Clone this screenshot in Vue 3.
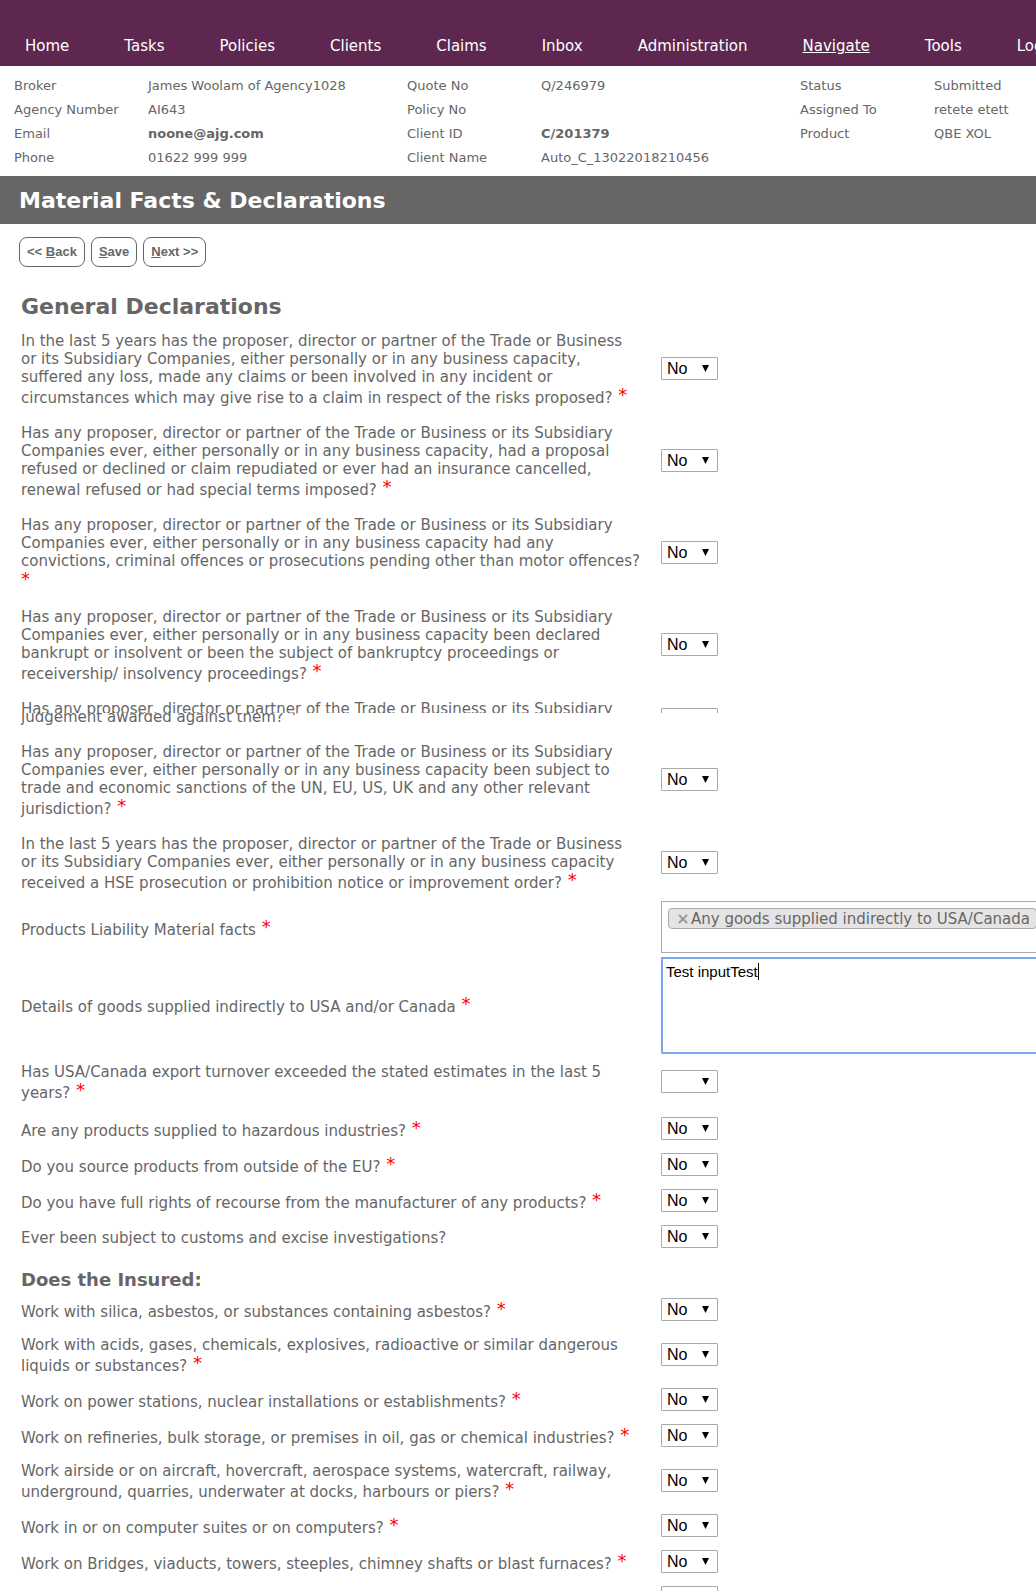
<script setup>
const nav = ['Home', 'Tasks', 'Policies', 'Clients', 'Claims', 'Inbox', 'Administration', 'Navigate', 'Tools', 'Logout']

const details = [
  [
    { term: 'Broker', value: 'James Woolam of Agency1028' },
    { term: 'Agency Number', value: 'AI643' },
    { term: 'Email', value: 'noone@ajg.com', strong: true },
    { term: 'Phone', value: '01622 999 999' },
  ],
  [
    { term: 'Quote No', value: 'Q/246979' },
    { term: 'Policy No', value: '' },
    { term: 'Client ID', value: 'C/201379', strong: true },
    { term: 'Client Name', value: 'Auto_C_13022018210456' },
  ],
  [
    { term: 'Status', value: 'Submitted' },
    { term: 'Assigned To', value: 'retete etett' },
    { term: 'Product', value: 'QBE XOL' },
  ],
]

const general = [
  { id: 'losses', required: true, value: 'No', text: 'In the last 5 years has the proposer, director or partner of the Trade or Business\nor its Subsidiary Companies, either personally or in any business capacity,\nsuffered any loss, made any claims or been involved in any incident or\ncircumstances which may give rise to a claim in respect of the risks proposed?' },
  { id: 'refused', required: true, value: 'No', text: 'Has any proposer, director or partner of the Trade or Business or its Subsidiary\nCompanies ever, either personally or in any business capacity, had a proposal\nrefused or declined or claim repudiated or ever had an insurance cancelled,\nrenewal refused or had special terms imposed?' },
  { id: 'convictions', required: true, value: 'No', text: 'Has any proposer, director or partner of the Trade or Business or its Subsidiary\nCompanies ever, either personally or in any business capacity had any\nconvictions, criminal offences or prosecutions pending other than motor offences?\n' },
  { id: 'bankrupt', required: true, value: 'No', text: 'Has any proposer, director or partner of the Trade or Business or its Subsidiary\nCompanies ever, either personally or in any business capacity been declared\nbankrupt or insolvent or been the subject of bankruptcy proceedings or\nreceivership/ insolvency proceedings?' },
  { id: 'judgement', required: false, value: 'No', part: 'head', text: 'Has any proposer, director or partner of the Trade or Business or its Subsidiary' },
  { id: 'judgement-end', required: true, part: 'tail', text: 'judgement awarded against them?' },
  { id: 'sanctions', required: true, value: 'No', text: 'Has any proposer, director or partner of the Trade or Business or its Subsidiary\nCompanies ever, either personally or in any business capacity been subject to\ntrade and economic sanctions of the UN, EU, US, UK and any other relevant\njurisdiction?' },
  { id: 'hse', required: true, value: 'No', text: 'In the last 5 years has the proposer, director or partner of the Trade or Business\nor its Subsidiary Companies ever, either personally or in any business capacity\nreceived a HSE prosecution or prohibition notice or improvement order?' },
]

const products = [
  { id: 'turnover', required: true, value: '', text: 'Has USA/Canada export turnover exceeded the stated estimates in the last 5\nyears?' },
  { id: 'hazardous', required: true, value: 'No', part: 'compact', text: 'Are any products supplied to hazardous industries?' },
  { id: 'outside-eu', required: true, value: 'No', part: 'compact', text: 'Do you source products from outside of the EU?' },
  { id: 'recourse', required: true, value: 'No', part: 'compact', text: 'Do you have full rights of recourse from the manufacturer of any products?' },
  { id: 'customs', required: false, value: 'No', part: 'compact', text: 'Ever been subject to customs and excise investigations?' },
]

const insured = [
  { id: 'asbestos', text: 'Work with silica, asbestos, or substances containing asbestos?' },
  { id: 'acids', text: 'Work with acids, gases, chemicals, explosives, radioactive or similar dangerous\nliquids or substances?' },
  { id: 'power', text: 'Work on power stations, nuclear installations or establishments?' },
  { id: 'refineries', text: 'Work on refineries, bulk storage, or premises in oil, gas or chemical industries?' },
  { id: 'airside', text: 'Work airside or on aircraft, hovercraft, aerospace systems, watercraft, railway,\nunderground, quarries, underwater at docks, harbours or piers?' },
  { id: 'computers', text: 'Work in or on computer suites or on computers?' },
  { id: 'bridges', text: 'Work on Bridges, viaducts, towers, steeples, chimney shafts or blast furnaces?' },
]

// No gap before the marker when it stands alone on its line
const marker = (text) => (text.endsWith('\n') ? '*' : '\u00a0*')
</script>

<template>
  <div class="page">
    <nav class="nav">
      <a v-for="item in nav" :key="item" href="#" :class="{ active: item === 'Navigate' }">{{ item }}</a>
    </nav>

    <section class="details">
      <dl v-for="(group, i) in details" :key="i">
        <div v-for="d in group" :key="d.term">
          <dt>{{ d.term }}</dt>
          <dd :class="{ strong: d.strong }">{{ d.value }}</dd>
        </div>
      </dl>
    </section>

    <h1>Material Facts &amp; Declarations</h1>

    <div class="actions">
      <button type="button">&lt;&lt; <u>B</u>ack</button>
      <button type="button"><u>S</u>ave</button>
      <button type="button"><u>N</u>ext &gt;&gt;</button>
    </div>

    <form @submit.prevent>
      <h2>General Declarations</h2>
      <div v-for="q in general" :key="q.id" class="row" :class="q.part">
        <label :for="q.part === 'tail' ? 'judgement' : q.id">{{ q.text }}<span v-if="q.required" class="req">{{ marker(q.text) }}</span></label>
        <select v-if="q.part !== 'tail'" :id="q.id" :value="q.value">
          <option value=""></option>
          <option>No</option>
          <option>Yes</option>
        </select>
      </div>

      <div class="row wide">
        <span id="facts-label" class="label">Products Liability Material facts<span class="req">&nbsp;*</span></span>
        <ul class="chips" aria-labelledby="facts-label">
          <li><button type="button" aria-label="Remove">×</button>Any goods supplied indirectly to USA/Canada</li>
        </ul>
      </div>
      <div class="row wide">
        <label for="goods">Details of goods supplied indirectly to USA and/or Canada<span class="req">&nbsp;*</span></label>
        <div class="field">
          <textarea id="goods">Test inputTest</textarea>
          <span class="caret"></span>
        </div>
      </div>

      <div v-for="q in products" :key="q.id" class="row" :class="q.part">
        <label :for="q.id">{{ q.text }}<span v-if="q.required" class="req">&nbsp;*</span></label>
        <select :id="q.id" :value="q.value">
          <option value=""></option>
          <option>No</option>
          <option>Yes</option>
        </select>
      </div>

      <h3>Does the Insured:</h3>
      <div v-for="q in insured" :key="q.id" class="row compact">
        <label :for="q.id">{{ q.text }}<span class="req">&nbsp;*</span></label>
        <select :id="q.id">
          <option>No</option>
          <option>Yes</option>
        </select>
      </div>
      <div class="row compact">
        <span></span>
        <select aria-label="Next question">
          <option></option>
        </select>
      </div>
    </form>
  </div>
</template>

<style>
body {
  margin: 0;
  background: #fff;
}
</style>

<style scoped>
.page {
  height: 100vh;
  overflow: hidden;
  color: #666;
  font-family: Verdana, "DejaVu Sans", sans-serif;
  font-size: 15px;
  line-height: 18px;
}
.nav {
  display: flex;
  gap: 55px;
  height: 66px;
  box-sizing: border-box;
  padding: 37px 0 0 25px;
  background: #5d2750;
  white-space: nowrap;
  overflow: hidden;
}
.nav a {
  color: #fff;
  text-decoration: none;
}
.nav a.active {
  text-decoration: underline;
}
.details {
  display: flex;
  height: 110px;
  box-sizing: border-box;
  padding: 8px 0 0 14px;
  font-size: 13px;
  line-height: 24px;
}
.details dl {
  width: 393px;
  flex: none;
  margin: 0;
}
.details dl > div {
  display: flex;
  min-height: 24px;
}
.details dt {
  width: 134px;
}
.details dd {
  margin: 0;
}
.strong {
  font-weight: bold;
}
h1 {
  margin: 0;
  padding: 2px 19px 0;
  background: #666;
  color: #fff;
  font-size: 22px;
  line-height: 46px;
}
.actions {
  display: flex;
  gap: 6px;
  padding: 13px 19px;
}
.actions button {
  height: 30px;
  padding: 0 7px 2px;
  border: 1px solid #666;
  border-radius: 8px;
  background: #fff;
  color: #666;
  font: bold 13px "Liberation Sans", Arial, sans-serif;
}
h2 {
  margin: 0;
  padding: 10px 21px 0;
  font-size: 22px;
  line-height: 34px;
}
h3 {
  margin: 0;
  padding: 13px 21px 0;
  font-size: 18px;
  line-height: 24px;
}
.row {
  display: grid;
  grid-template-columns: 640px 1fr;
  align-items: center;
  padding: 6px 0 9px 21px;
}
.row label,
.label {
  padding-top: 2px;
  white-space: pre;
}
.compact {
  min-height: 36px;
  box-sizing: border-box;
  padding: 6px 0 7px 21px;
}
.row select {
  margin: -4px 0;
}
.req {
  color: #f00;
  font-size: 18px;
  line-height: 18px;
  vertical-align: 2px;
}
.head {
  height: 21px;
  box-sizing: border-box;
  padding: 0 0 0 21px;
  grid-template-rows: 54px;
  overflow: hidden;
}
.head label {
  align-self: start;
  padding-top: 8px;
}
.tail {
  height: 22px;
  box-sizing: border-box;
  grid-template-rows: 13px;
  padding: 0 0 9px 21px;
  align-items: end;
  overflow: hidden;
}
.wide {
  padding: 0 0 0 21px;
}
.wide label,
.wide .label {
  padding: 0 0 2px;
}
select {
  appearance: none;
  width: 57px;
  height: 23px;
  box-sizing: border-box;
  padding: 0 0 0 5px;
  border: 1px solid #a9a9a9;
  border-radius: 1px;
  background: #fff url("data:image/svg+xml,%3Csvg xmlns='http://www.w3.org/2000/svg' width='8' height='8'%3E%3Cpath d='M0 0h7L3.5 7z'/%3E%3C/svg%3E") no-repeat 40px 7px;
  color: #000;
  font: 16px "Liberation Sans", Arial, sans-serif;
}
.chips {
  width: 600px;
  height: 52px;
  box-sizing: border-box;
  margin: 0 0 4px;
  padding: 6px;
  border: 1px solid #aaa;
  list-style: none;
}
.chips li {
  display: inline-flex;
  align-items: center;
  height: 21px;
  box-sizing: border-box;
  padding: 0 6px;
  border: 1px solid #aaa;
  border-radius: 4px;
  background: #e4e4e4;
  white-space: nowrap;
}
.chips button {
  width: 16px;
  padding: 0;
  border: 0;
  background: none;
  color: #999;
  font: bold 16px "DejaVu Sans", sans-serif;
  line-height: 18px;
}
.field {
  position: relative;
  height: 98px;
}
textarea {
  display: block;
  width: 600px;
  height: 97px;
  box-sizing: border-box;
  padding: 4px 3px;
  border: 2px solid #7aa7f0;
  border-radius: 1px;
  outline: none;
  resize: none;
  color: #000;
  font: 15px/18px "Liberation Sans", Arial, sans-serif;
}
.caret {
  position: absolute;
  left: 97px;
  top: 6px;
  width: 1px;
  height: 17px;
  background: #000;
}
</style>
